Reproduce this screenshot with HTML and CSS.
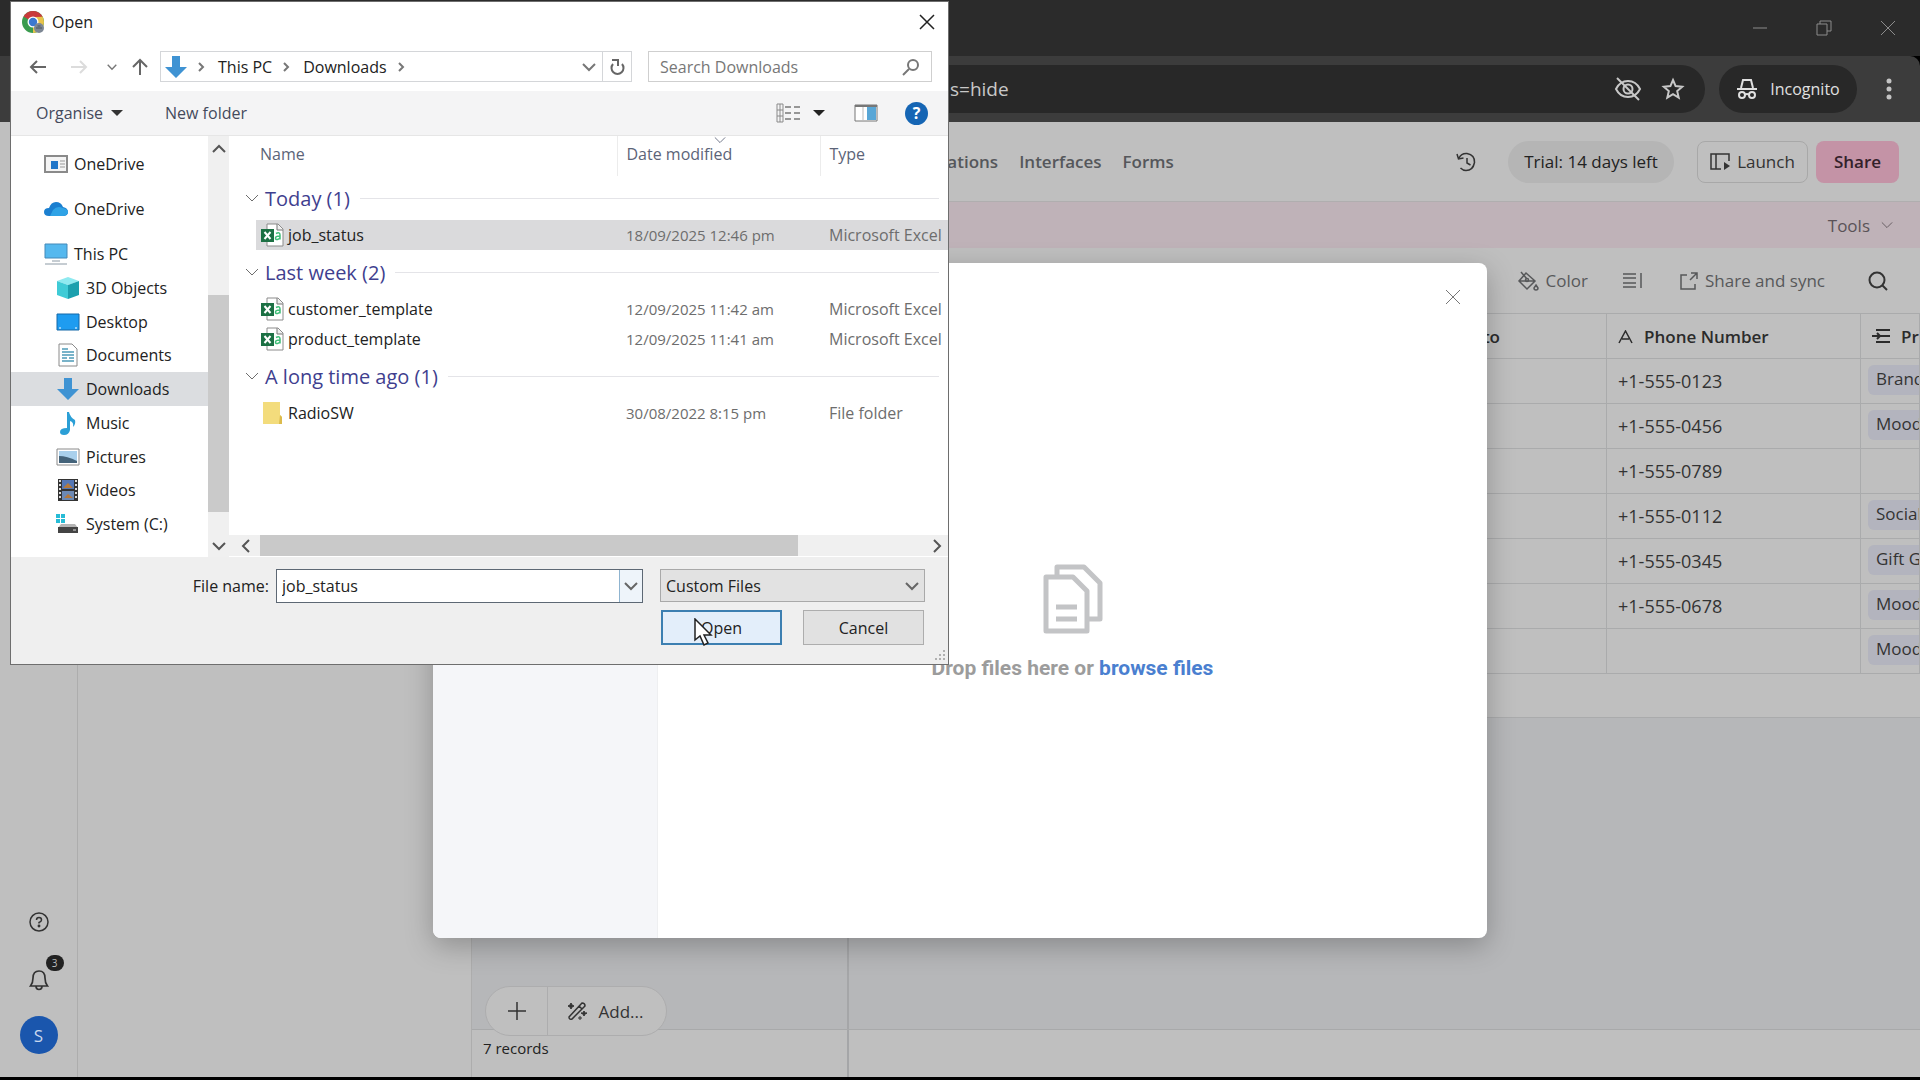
FILE: index.html
```html
<!DOCTYPE html>
<html lang="en">
<head>
  <meta charset="UTF-8">
  <meta name="viewport" content="width=device-width, initial-scale=1.0">
  <title>Import file</title>
  <link rel="stylesheet" href="styles.css">
</head>
<body>
  <svg class="defs" width="0" height="0">
    <symbol id="chevron" viewBox="0 0 14 14"><path d="M1 4l6 6 6-6" fill="none" stroke="currentColor"/></symbol>
    <symbol id="close" viewBox="0 0 16 16"><path d="M1 1l14 14M15 1L1 15" fill="none" stroke="currentColor"/></symbol>
    <symbol id="download" viewBox="0 0 22 24"><path d="M7 1h8v11h7L11 23 0 12h7z" fill="#3f93d3"/></symbol>
    <symbol id="excel" viewBox="0 0 24 24">
      <path d="M7 1h11l5 5v17H7z" fill="#fff" stroke="#8b8b8b"/>
      <path d="M17 1v6h6" fill="#eee" stroke="#777"/>
      <rect x="1" y="6" width="13" height="13" fill="#1c7044"/>
      <path d="M4.500 9l6 7M10.500 9l-6 7" stroke="#fff" stroke-width="2"/>
      <path d="M16 10.500q4-2 4 1.500v4.500M20 13q-4.500 0-4.500 2t2 1.500q2-.5 2.500-2" fill="none" stroke="#3fbf78" stroke-width="1.500"/>
    </symbol>
  </svg>

  <!-- Browser -->
  <div class="titlebar">
    <button aria-label="Minimise"><svg width="16" height="16" viewBox="0 0 16 16"><path d="M1 8h14" stroke="currentColor"/></svg></button>
    <button aria-label="Restore"><svg width="16" height="16" viewBox="0 0 16 16" fill="none" stroke="currentColor"><path d="M1 4h10v11H1zM4 4V1h11v10h-4"/></svg></button>
    <button aria-label="Close window"><svg width="16" height="16"><use href="#close"/></svg></button>
  </div>
  <div class="browser-bar">
    <div class="address">
      <span class="url">s=hide</span>
      <div class="address-icons">
        <svg width="28" height="24" viewBox="0 0 28 24" fill="none" stroke="currentColor" stroke-width="2"><path d="M2 12q4-8 12-8t12 8q-4 8-12 8T2 12z"/><circle cx="14" cy="12" r="4.500"/><path d="M3 1l22 22"/></svg>
        <svg width="24" height="24" viewBox="0 0 24 24" fill="none" stroke="currentColor" stroke-width="2"><path d="M12 3l2.600 6.100 6.600.6-5 4.400 1.500 6.500-5.700-3.400-5.700 3.400 1.500-6.500-5-4.400 6.600-.6z"/></svg>
      </div>
    </div>
    <div class="incognito">
      <svg width="22" height="22" viewBox="0 0 22 22" fill="none" stroke="currentColor" stroke-width="2"><path d="M1 11h20M5 10l2-8h8l2 8" /><circle cx="6" cy="17" r="3"/><circle cx="16" cy="17" r="3"/><path d="M9 16.500q2-1 4 0"/></svg>
      <span>Incognito</span>
    </div>
    <button class="menu" aria-label="Menu"><svg width="6" height="24" viewBox="0 0 6 24" fill="currentColor"><circle cx="3" cy="4" r="2.500"/><circle cx="3" cy="12" r="2.500"/><circle cx="3" cy="20" r="2.500"/></svg></button>
  </div>

  <!-- App -->
  <div class="app">
    <aside class="rail">
      <button class="support" aria-label="Help"><svg width="20" height="20" viewBox="0 0 20 20" fill="none" stroke="currentColor" stroke-width="1.500"><circle cx="10" cy="10" r="9"/><path d="M7.500 8q0-2.500 2.500-2.500T12.500 8q0 1.500-2.500 2.500v1"/><circle cx="10" cy="14" r=".7"/></svg></button>
      <button class="bell" aria-label="Notifications">
        <svg width="20" height="22" viewBox="0 0 20 22" fill="none" stroke="currentColor" stroke-width="1.700"><path d="M10 2q-6 0-6 7 0 5-2.500 8h17Q16 14 16 9q0-7-6-7zM7 17q0 3.500 3 3.500t3-3.500"/></svg>
        <span class="badge">3</span>
      </button>
      <button class="avatar">S</button>
    </aside>
    <div class="main">
      <header class="header">
        <nav class="tabs">
          <a href="#">Automations</a>
          <a href="#">Interfaces</a>
          <a href="#">Forms</a>
        </nav>
        <div class="actions">
          <svg class="history" width="20" height="20" viewBox="0 0 20 20" fill="none" stroke="currentColor" stroke-width="1.500"><path d="M3 6q2.500-5 8-4.500 8 1.500 7.500 9-1.500 8-8.500 8-3 0-5.500-2.500M1 2l1.500 5 5-1M11 6v5l3.500 2"/></svg>
          <button class="trial">Trial: 14 days left</button>
          <button class="launch"><svg width="20" height="20" viewBox="0 0 20 20" fill="none" stroke="currentColor" stroke-width="1.500"><path d="M19 9V2H1v15h10M6 2v15M11 17h-5"/><path d="M14 10l6 4-6 4z" fill="currentColor" stroke="none"/></svg>Launch</button>
          <button class="share">Share</button>
        </div>
      </header>
      <div class="table-tabs">
        <button>Tools <svg width="12" height="12"><use href="#chevron"/></svg></button>
      </div>
      <div class="workspace">
        <div class="sidebar"></div>
        <div class="view">
          <div class="view-bar">
            <button class="tool color"><svg width="22" height="22" viewBox="0 0 22 22" fill="none" stroke="currentColor" stroke-width="1.500"><path d="M9 3l9 8-8 8-8-8zM4 2l6 7M2 11h16"/><circle cx="10" cy="10" r="1.500"/><path d="M19 15l2 3q0 2-2 2t-2-2z"/></svg>Color</button>
            <button class="tool height" aria-label="Row height"><svg width="20" height="18" viewBox="0 0 20 18" stroke="currentColor" stroke-width="1.500"><path d="M0 2h13M0 6h13M0 11h13M0 15h13M18 1v15"/></svg></button>
            <button class="tool sync"><svg width="18" height="18" viewBox="0 0 18 18" fill="none" stroke="currentColor" stroke-width="1.500"><path d="M7 3H1v14h14v-5M11 1h6v6M17 1l-7 7"/></svg>Share and sync</button>
            <button class="tool" aria-label="Search"><svg width="20" height="20" viewBox="0 0 20 20" fill="none" stroke="#333" stroke-width="2"><circle cx="9" cy="9" r="7.500"/><path d="M14 14l5 5"/></svg></button>
          </div>
          <table class="records">
            <colgroup><col class="c-first"><col><col class="c-phone"><col class="c-project"></colgroup>
            <thead>
              <tr>
                <th></th>
                <th class="to">to</th>
                <th><svg width="15" height="14" viewBox="0 0 15 14" fill="none" stroke="currentColor" stroke-width="1.500"><path d="M1 13L7.500 1 14 13M4 9h7"/></svg>Phone Number</th>
                <th><svg width="18" height="16" viewBox="0 0 18 16" stroke="currentColor" stroke-width="2"><path d="M4 2h14M8 8h10M4 14h14M0 8h8M5 5l3 3-3 3" fill="none"/></svg>Pro</th>
              </tr>
            </thead>
            <tbody>
              <tr><td></td><td></td><td>+1-555-0123</td><td><span class="chip">Brand</span></td></tr>
              <tr><td></td><td></td><td>+1-555-0456</td><td><span class="chip">Mood</span></td></tr>
              <tr><td></td><td></td><td>+1-555-0789</td><td></td></tr>
              <tr><td></td><td></td><td>+1-555-0112</td><td><span class="chip">Social</span></td></tr>
              <tr><td></td><td></td><td>+1-555-0345</td><td><span class="chip">Gift G</span></td></tr>
              <tr><td></td><td></td><td>+1-555-0678</td><td><span class="chip">Mood</span></td></tr>
              <tr><td></td><td></td><td></td><td><span class="chip">Mood</span></td></tr>
            </tbody>
          </table>
          <div class="add-row"></div>
          <div class="empty"><div class="frozen"></div></div>
          <footer class="summary">
            <div class="count">7 records</div>
            <div class="add-pill">
              <button class="plus" aria-label="Add record"><svg width="18" height="18" viewBox="0 0 18 18" stroke="currentColor" stroke-width="1.500"><path d="M9 0v18M0 9h18"/></svg></button>
              <button class="add"><svg width="20" height="20" viewBox="0 0 20 20" fill="none" stroke="currentColor" stroke-width="1.500"><path d="M2 16L15 2q3 0 3 3L5 18q-3 1-3-2zM12 5l3 3"/><path d="M4 2l1 2 2 1-2 1-1 2-1-2-2-1 2-1zM17 10l1 2 2 0-2 1-1 2-1-2-2-1 2 0zM13 15v4M11 17h4" fill="currentColor" stroke-width="1"/></svg>Add...</button>
            </div>
          </footer>
        </div>
      </div>
    </div>

    <!-- Upload modal -->
    <div class="overlay">
      <div class="modal">
        <div class="sources"></div>
        <div class="upload">
          <div class="upload-head"><button aria-label="Close"><svg width="16" height="16"><use href="#close"/></svg></button></div>
          <div class="drop">
            <svg width="62" height="72" viewBox="0 0 62 72" fill="none" stroke="#c3c4c6" stroke-width="5" stroke-linejoin="round"><path d="M4 14h27l14 14v40H4z"/><path d="M15 12V4h27l16 16v36h-12"/><path d="M14 44h21M14 56h21"/></svg>
            <p>Drop files here or <a href="#">browse files</a></p>
          </div>
        </div>
      </div>
    </div>
  </div>

  <!-- File picker window -->
  <div class="picker">
    <div class="picker-title">
      <svg width="24" height="24" viewBox="0 0 24 24">
        <circle cx="12" cy="12" r="11" fill="#3a9b4e"/>
        <path d="M2.500 6.500A11 11 0 0 1 21.500 6.500L12 12z" fill="#c93a3c"/>
        <path d="M21.500 6.500A11 11 0 0 1 12 23L12 12 15 7z" fill="#e9c34a"/>
        <path d="M12 6.500h9.500L12 3z" fill="#c93a3c"/>
        <circle cx="12" cy="12" r="5.500" fill="#fff"/><circle cx="12" cy="12" r="4.200" fill="#3b78d0"/>
        <circle cx="18" cy="18" r="5" fill="#7d8794"/><path d="M15 18h6M16.500 16h3" stroke="#4b535e"/>
      </svg>
      <span>Open</span>
      <button aria-label="Close"><svg width="16" height="16" stroke-width="1.500"><use href="#close"/></svg></button>
    </div>
    <div class="picker-nav">
      <div class="arrows">
        <svg width="18" height="16" viewBox="0 0 18 16" fill="none" stroke="#666" stroke-width="2"><path d="M17 8H2M8 2L2 8l6 6"/></svg>
        <svg width="18" height="16" viewBox="0 0 18 16" fill="none" stroke="#dcdcdc" stroke-width="2"><path d="M1 8h15M10 2l6 6-6 6"/></svg>
        <svg class="recent" width="10" height="10" stroke-width="2"><use href="#chevron"/></svg>
        <svg width="16" height="18" viewBox="0 0 16 18" fill="none" stroke="#666" stroke-width="2"><path d="M8 17V2M1 9l7-7 7 7"/></svg>
      </div>
      <div class="crumbs">
        <svg width="22" height="24"><use href="#download"/></svg>
        <svg class="sep" width="8" height="10" viewBox="0 0 8 10"><path d="M2 1l4 4-4 4" fill="none" stroke="#777" stroke-width="2"/></svg>
        <span>This PC</span>
        <svg class="sep" width="8" height="10" viewBox="0 0 8 10"><path d="M2 1l4 4-4 4" fill="none" stroke="#777" stroke-width="2"/></svg>
        <span>Downloads</span>
        <svg class="sep" width="8" height="10" viewBox="0 0 8 10"><path d="M2 1l4 4-4 4" fill="none" stroke="#777" stroke-width="2"/></svg>
        <svg class="drop-arrow" width="14" height="14" stroke-width="2"><use href="#chevron"/></svg>
        <button class="refresh" aria-label="Refresh"><svg width="16" height="18" viewBox="0 0 16 18" fill="none" stroke="#666" stroke-width="2"><path d="M13 6a6 6 0 1 1-9 0M3 2h6v6"/></svg></button>
      </div>
      <div class="search">
        <input type="text" aria-label="Search Downloads" placeholder="Search Downloads">
        <svg width="18" height="18" viewBox="0 0 18 18" fill="none" stroke="#777" stroke-width="2"><circle cx="11" cy="7" r="5"/><path d="M7 11l-6 6"/></svg>
      </div>
    </div>
    <div class="picker-tools">
      <button>Organise <svg width="12" height="6" viewBox="0 0 12 6"><path d="M0 0h12L6 6z" fill="#333"/></svg></button>
      <button>New folder</button>
      <div class="view-tools">
        <svg width="24" height="20" viewBox="0 0 24 20" fill="none" stroke="#8a8a8a"><path d="M1 1h6v18H1zM1 7h6M1 13h6M4 1v18"/><path d="M9 4h15M9 10h15M9 16h15" stroke="#777" stroke-width="1.500" stroke-dasharray="6 3"/></svg>
        <svg class="caret" width="12" height="6" viewBox="0 0 12 6"><path d="M0 0h12L6 6z" fill="#222"/></svg>
        <svg class="pane" width="24" height="18" viewBox="0 0 24 18"><path d="M1 1h22v16H1z" fill="#fff" stroke="#777"/><path d="M1 2h22" stroke="#777" stroke-width="2"/><path d="M13 3h9v13h-9z" fill="#58a6d6"/><path d="M9 3v13" stroke="#bbb"/></svg>
        <button class="help" aria-label="Help">?</button>
      </div>
    </div>
    <div class="picker-body">
      <div class="tree">
        <ul class="roots">
          <li><svg width="24" height="18" viewBox="0 0 24 18"><path d="M1 1h22v16H1z" fill="#f4f4f4" stroke="#8a8a8a" stroke-width="2"/><path d="M7 6h7v8H7z" fill="#2277c9"/><path d="M16 6h5M16 9h5M16 12h5" stroke="#999"/></svg>OneDrive</li>
          <li><svg width="24" height="16" viewBox="0 0 24 16"><path d="M5 15q-5 0-5-4t5-4q2-6 7-6t7 5q5 1 5 5t-5 4z" fill="#1b7fd0"/><path d="M9 9q4-5 10-2 5 1 5 4t-5 4H6z" fill="#2fa3e6"/></svg>OneDrive</li>
          <li><svg width="24" height="22" viewBox="0 0 24 22"><path d="M1 1h22v14H1z" fill="#55b8ee" stroke="#4489b8"/><path d="M8 18h8M1 21h22" stroke="#8c9aa5"/></svg>This PC</li>
        </ul>
        <ul class="folders">
          <li><svg width="24" height="24" viewBox="0 0 24 24"><path d="M1 5l11-4 11 4-11 4z" fill="#8feaf0"/><path d="M1 5l11 4v14L1 19z" fill="#3fcbd6"/><path d="M23 5L12 9v14l11-4z" fill="#1ca0ae"/></svg>3D Objects</li>
          <li><svg width="24" height="18" viewBox="0 0 24 18"><path d="M1 1h22v16H1z" fill="#1e9cf0" stroke="#1568a8"/><path d="M3 15h2M19 15h2" stroke="#fff"/></svg>Desktop</li>
          <li><svg width="24" height="24" viewBox="0 0 24 24"><path d="M3 1h13l5 5v17H3z" fill="#fff" stroke="#8a8a8a"/><path d="M6 6h6M6 9h12M6 12h12M6 15h5M6 18h12M13 15h5" stroke="#4d9bb8" stroke-width="1.500"/></svg>Documents</li>
          <li class="active"><svg width="24" height="24"><use href="#download"/></svg>Downloads</li>
          <li><svg width="24" height="24" viewBox="0 0 24 24"><path d="M11 1h2q1 5 6 8 1 4-2 7 1-5-3-6v9q-1 5-6 5-4 0-4-3 0-4 7-4z" fill="#2b9fd6"/></svg>Music</li>
          <li><svg width="24" height="18" viewBox="0 0 24 18"><path d="M1 1h22v16H1z" fill="#fff" stroke="#8a8a8a"/><path d="M3 3h18v12H3z" fill="#a9d0ec"/><path d="M3 8q8 0 18 5v2H3z" fill="#44637a"/></svg>Pictures</li>
          <li><svg width="24" height="24" viewBox="0 0 24 24"><path d="M2 1h20v22H2z" fill="#333"/><path d="M6 2h12v9H6z" fill="#5577b5"/><path d="M6 13h12v9H6z" fill="#6c89b5"/><path d="M7 10l5-5 5 5zM8 20l4-4 5 4z" fill="#b5793c"/><path d="M4 2v20M20 2v20" stroke="#ddd" stroke-width="2" stroke-dasharray="2 2"/></svg>Videos</li>
          <li><svg width="24" height="20" viewBox="0 0 24 20"><path d="M0 0h4v4H0zM5 0h4v4H5zM0 5h4v4H0zM5 5h4v4H5z" fill="#27bcd6"/><path d="M5 10h14l3 4H2z" fill="#b5b5b5"/><path d="M2 13h20v6H2z" fill="#444"/><path d="M17 16h3" stroke="#ddd"/></svg>System (C:)</li>
        </ul>
      </div>
      <div class="vscroll">
        <svg width="14" height="14" stroke-width="2"><use href="#chevron" transform="rotate(180 7 7)"/></svg>
        <div class="vthumb"></div>
        <svg width="14" height="14" stroke-width="2"><use href="#chevron"/></svg>
      </div>
      <div class="files">
        <table class="file-list">
          <colgroup><col class="c-indent"><col class="c-name"><col class="c-date"><col></colgroup>
          <thead>
            <tr>
              <th></th><th>Name</th>
              <th class="sorted">Date modified<svg width="12" height="12"><use href="#chevron"/></svg></th>
              <th>Type</th>
            </tr>
          </thead>
          <tbody>
            <tr class="group"><td colspan="4"><div><svg width="14" height="14"><use href="#chevron"/></svg><span>Today (1)</span></div></td></tr>
            <tr class="selected"><td></td><td class="name"><div><svg width="24" height="24"><use href="#excel"/></svg>job_status</div></td><td class="date">18/09/2025 12:46 pm</td><td>Microsoft Excel</td></tr>
            <tr class="group"><td colspan="4"><div><svg width="14" height="14"><use href="#chevron"/></svg><span>Last week (2)</span></div></td></tr>
            <tr><td></td><td class="name"><div><svg width="24" height="24"><use href="#excel"/></svg>customer_template</div></td><td class="date">12/09/2025 11:42 am</td><td>Microsoft Excel</td></tr>
            <tr><td></td><td class="name"><div><svg width="24" height="24"><use href="#excel"/></svg>product_template</div></td><td class="date">12/09/2025 11:41 am</td><td>Microsoft Excel</td></tr>
            <tr class="group"><td colspan="4"><div><svg width="14" height="14"><use href="#chevron"/></svg><span>A long time ago (1)</span></div></td></tr>
            <tr><td></td><td class="name"><div><svg width="24" height="24" viewBox="0 0 24 24"><path d="M3 1h17v13l2 2v7H3z" fill="#f3dc7c"/><path d="M20 14l2 2v7h-3z" fill="#dcbb4c"/></svg>RadioSW</div></td><td class="date">30/08/2022 8:15 pm</td><td>File folder</td></tr>
          </tbody>
        </table>
        <div class="hscroll">
          <svg width="14" height="14" stroke-width="2"><use href="#chevron" transform="rotate(90 7 7)"/></svg>
          <div class="hthumb"></div>
          <svg width="14" height="14" stroke-width="2"><use href="#chevron" transform="rotate(-90 7 7)"/></svg>
        </div>
      </div>
    </div>
    <div class="picker-foot">
      <label for="fileName">File name:</label>
      <div class="combo">
        <input type="text" id="fileName" value="job_status">
        <button aria-label="Show names"><svg width="14" height="14" stroke-width="2"><use href="#chevron"/></svg></button>
      </div>
      <div class="confirm">
        <div class="select">
          <select aria-label="File type"><option>Custom Files</option></select>
          <svg width="14" height="14" stroke-width="2"><use href="#chevron"/></svg>
        </div>
        <div class="buttons">
          <button class="open">Open</button>
          <button>Cancel</button>
        </div>
      </div>
      <svg class="grip" width="12" height="12" viewBox="0 0 12 12" fill="#b0b0b0"><path d="M9 0h2v2H9zM5 4h2v2H5zM9 4h2v2H9zM1 8h2v2H1zM5 8h2v2H5zM9 8h2v2H9z"/></svg>
    </div>
    <svg class="cursor" width="20" height="28" viewBox="0 0 20 28"><path d="M1 1v21l5-4 4 9 4-2-4-8h7z" fill="#fff" stroke="#222" stroke-width="1.500"/></svg>
  </div>
</body>
</html>
```
FILE: styles.css
```css
* {
  box-sizing: border-box;
}

body {
  font-family: 'Open Sans', 'Noto Sans', sans-serif;
  font-size: 16px;
  margin: 0;
  height: 100vh;
  display: flex;
  flex-direction: column;
  background: #000;
  color: #333;
  overflow: hidden;
}

button,
input,
select {
  font: inherit;
  color: inherit;
}

button {
  background: none;
  border: none;
  padding: 0;
  display: flex;
  align-items: center;
  justify-content: center;
}

svg {
  display: block;
  flex: none;
}

.defs {
  position: absolute;
}

/* Browser */
.titlebar {
  height: 56px;
  flex: none;
  background: #2b2b2b;
  color: #8c8c8c;
  display: flex;
  justify-content: flex-end;
  align-items: center;
  gap: 48px;
  padding-right: 24px;
}

.browser-bar {
  height: 66px;
  flex: none;
  background: #3c3c3c;
  border-top-right-radius: 10px;
  display: flex;
  align-items: center;
  padding: 0 28px 0 160px;
}

.address {
  flex: 1;
  height: 48px;
  border-radius: 0 24px 24px 0;
  background: #282828;
  color: #c8c8c8;
  display: flex;
  align-items: center;
  justify-content: space-between;
  padding: 0 20px 0 790px;
}

.url {
  font-size: 19px;
}

.address-icons {
  display: flex;
  gap: 19px;
}

.incognito {
  width: 138px;
  height: 48px;
  margin: 0 29px 0 14px;
  border-radius: 24px;
  background: #282828;
  color: #e0e0e0;
  display: flex;
  align-items: center;
  justify-content: center;
  gap: 12px;
}

.menu {
  color: #c4c4c4;
}

/* App */
.app {
  flex: 1;
  min-height: 0;
  margin-bottom: 3px;
  background: #bfbfbf;
  font-size: 17px;
  display: flex;
  position: relative;
}

.rail {
  width: 78px;
  border-right: 1px solid #adadad;
  display: flex;
  flex-direction: column;
  justify-content: flex-end;
  align-items: center;
  gap: 25px;
  padding-bottom: 23px;
}

.support {
  margin-bottom: 12px;
}

.bell {
  position: relative;
}

.badge {
  position: absolute;
  left: 17px;
  top: -14px;
  width: 18px;
  height: 16px;
  line-height: 16px;
  border-radius: 8px;
  background: #222;
  color: #bfbfbf;
  font-size: 10px;
}

.avatar {
  width: 38px;
  height: 38px;
  border-radius: 50%;
  background: #1a56ad;
  color: #c9d8ee;
}

.main {
  flex: 1;
  min-width: 0;
  display: flex;
  flex-direction: column;
}

.header {
  height: 80px;
  border-bottom: 1px solid #b0aeaf;
  display: flex;
  align-items: center;
  justify-content: space-between;
  padding: 0 21px 0 814px;
}

.tabs {
  display: flex;
  gap: 21px;
}

.tabs a {
  color: #55575b;
  font-weight: 600;
  text-decoration: none;
}

.actions {
  display: flex;
  align-items: center;
}

.history {
  margin-right: 32px;
}

.trial {
  height: 42px;
  width: 166px;
  border-radius: 21px;
  background: #b5b5b5;
  margin-right: 23px;
  color: #222;
}

.launch {
  height: 42px;
  width: 111px;
  gap: 7px;
  border: 1px solid #a8a8a8;
  border-radius: 8px;
  margin-right: 8px;
}

.share {
  height: 42px;
  width: 83px;
  border-radius: 8px;
  background: #c493a6;
  color: #33212a;
  font-weight: 600;
}

.table-tabs {
  height: 46px;
  background: #bfb2b8;
  display: flex;
  justify-content: flex-end;
  padding-right: 27px;
  color: #5a5257;
}

.table-tabs button {
  gap: 11px;
}

.workspace {
  flex: 1;
  min-height: 0;
  display: flex;
}

.sidebar {
  width: 394px;
  border-right: 1px solid #adadad;
}

.view {
  flex: 1;
  min-width: 0;
  display: flex;
  flex-direction: column;
}

.view-bar {
  height: 65px;
  display: flex;
  align-items: center;
  justify-content: flex-end;
  padding-right: 32px;
}

.tool {
  gap: 7px;
  color: #57585a;
}

.color {
  margin-right: 35px;
}

.height {
  margin-right: 37px;
}

.sync {
  margin-right: 43px;
}

.records {
  table-layout: fixed;
  width: 100%;
  border-collapse: collapse;
}

.c-first {
  width: 377px;
}

.c-phone {
  width: 254px;
}

.c-project {
  width: 59px;
}

.records th,
.records td {
  height: 45px;
  border: 1px solid #aaabac;
  border-left: none;
  padding: 0 0 0 11px;
  font-size: 18px;
  text-align: left;
  white-space: nowrap;
  overflow: hidden;
}

.records td:last-child {
  padding-left: 7px;
}

.records th {
  color: #2b2b2b;
  font-size: 17px;
  font-weight: 600;
}

.records th svg {
  display: inline-block;
  vertical-align: -1px;
  margin-right: 11px;
}

.records .to {
  text-align: right;
  padding-right: 106px;
}

.chip {
  display: block;
  width: 100px;
  height: 30px;
  line-height: 28px;
  margin-bottom: 3px;
  padding-left: 8px;
  border-radius: 6px;
  background: #b3b4be;
  font-size: 17px;
}

.add-row {
  height: 44px;
  border-bottom: 1px solid #aaabac;
}

.empty {
  flex: 1;
  background: #b6b7b9;
}

.frozen {
  width: 377px;
  height: 100%;
  border-right: 2px solid #a5a6a8;
}

.summary {
  height: 48px;
  border-top: 1px solid #a8a9aa;
  position: relative;
}

.count {
  width: 377px;
  height: 100%;
  border-right: 2px solid #a5a6a8;
  font-size: 15px;
  line-height: 36px;
  padding-left: 11px;
  color: #222;
}

.add-pill {
  position: absolute;
  left: 13px;
  bottom: 41px;
  width: 182px;
  height: 50px;
  border: 1px solid #adadae;
  border-radius: 25px;
  background: #bfbfbf;
  display: flex;
}

.plus {
  width: 62px;
  border-right: 1px solid #adadae;
}

.add {
  flex: 1;
  gap: 12px;
  padding-right: 4px;
}

/* Upload modal */
.overlay {
  position: absolute;
  inset: 0;
  display: flex;
  align-items: center;
  justify-content: center;
  padding-top: 2px;
}

.modal {
  width: 1054px;
  height: 675px;
  border-radius: 8px;
  background: #fff;
  box-shadow: 0 8px 28px rgba(0, 0, 0, 0.25);
  display: flex;
  overflow: hidden;
}

.sources {
  width: 225px;
  background: #f5f6f9;
  border-right: 1px solid #eeeff1;
}

.upload {
  flex: 1;
  display: flex;
  flex-direction: column;
}

.upload-head {
  height: 50px;
  display: flex;
  justify-content: flex-end;
  align-items: flex-end;
  padding: 0 26px 8px;
  color: #777;
}

.drop {
  flex: 1;
  display: flex;
  flex-direction: column;
  align-items: center;
  justify-content: center;
  padding-bottom: 8px;
}

.drop p {
  font-family: Roboto, sans-serif;
  font-weight: 700;
  font-size: 21px;
  line-height: 26px;
  color: #9c9c9c;
  margin: 20px 0 0;
}

.drop a {
  color: #4a7fd0;
  text-decoration: none;
}

/* File picker */
.picker {
  position: absolute;
  left: 10px;
  top: 1px;
  width: 939px;
  border: 1px solid #6e6e6e;
  background: #fff;
  color: #222;
}

.picker-title {
  height: 40px;
  display: flex;
  align-items: center;
  gap: 7px;
  padding: 0 13px 0 10px;
}

.picker-title button {
  margin-left: auto;
}

.picker-nav {
  height: 49px;
  display: flex;
  align-items: center;
}

.arrows {
  width: 149px;
  padding-left: 18px;
  display: flex;
  align-items: center;
  gap: 23px;
}

.arrows .recent {
  color: #777;
  margin: 0 -8px 0 -4px;
}

.crumbs {
  width: 472px;
  height: 31px;
  border: 1px solid #d4d6d9;
  display: flex;
  align-items: center;
  padding-left: 4px;
}

.sep {
  margin: 0 13px 0 10px;
}

.drop-arrow {
  margin-left: auto;
  margin-right: 6px;
  color: #777;
}

.refresh {
  width: 29px;
  height: 100%;
  border-left: 1px solid #d4d6d9;
}

.search {
  width: 284px;
  height: 31px;
  margin-left: 16px;
  border: 1px solid #cfcfcf;
  display: flex;
  align-items: center;
  padding: 0 11px;
}

.search input {
  flex: 1;
  min-width: 0;
  border: none;
  padding: 0;
  background: none;
}

.search input::placeholder {
  color: #777;
}

.picker-tools {
  height: 45px;
  background: #f4f4f5;
  border-bottom: 1px solid #e6e6e6;
  color: #444a5c;
  display: flex;
  align-items: center;
  gap: 42px;
  padding: 0 20px 0 25px;
}

.picker-tools button {
  gap: 8px;
}

.view-tools {
  margin-left: auto;
  display: flex;
  align-items: center;
}

.caret {
  margin: 0 29px 0 13px;
}

.pane {
  margin-right: 27px;
}

.view-tools .help {
  width: 23px;
  height: 23px;
  border-radius: 50%;
  background: #1565b4;
  color: #fff;
  font-weight: 700;
}

.picker-body {
  height: 421px;
  display: flex;
}

.tree {
  width: 197px;
}

.tree ul {
  list-style: none;
  margin: 0;
  padding: 0;
  display: grid;
}

.tree li {
  display: flex;
  align-items: center;
  gap: 6px;
}

.tree .roots {
  grid-auto-rows: 45px;
  padding-top: 5px;
}

.roots li {
  padding-left: 33px;
}

.tree .folders {
  height: 270px;
  grid-auto-rows: 1fr;
  margin-top: -5px;
}

.folders li {
  padding-left: 45px;
}

.folders .active {
  background: #dbdde0;
}

.vscroll {
  width: 21px;
  background: #f0f0f0;
  color: #555;
  display: flex;
  flex-direction: column;
  align-items: center;
  justify-content: space-between;
  padding: 6px 0 4px;
}

.vthumb {
  width: 21px;
  height: 217px;
  margin-bottom: 2px;
  margin-top: 113px;
  background: #cacaca;
}

.files {
  flex: 1;
  min-width: 0;
  display: flex;
  flex-direction: column;
  justify-content: space-between;
}

.file-list {
  table-layout: fixed;
  width: 100%;
  border-collapse: collapse;
}

.c-indent {
  width: 27px;
}

.c-name {
  width: 361px;
}

.c-date {
  width: 203px;
}

.file-list td,
.file-list th {
  height: 30px;
  padding: 0 0 0 9px;
  color: #6d6d6d;
  font-weight: 400;
  text-align: left;
  white-space: nowrap;
}

.file-list th {
  height: 40px;
  padding-bottom: 4px;
  color: #5c6478;
  position: relative;
}

.file-list th:nth-child(2) {
  padding-left: 4px;
}

.file-list th + th + th {
  border-left: 1px solid #ececec;
}

.sorted svg {
  position: absolute;
  top: -2px;
  left: 96px;
}

.file-list .date {
  font-size: 15px;
}

.file-list .name {
  padding-left: 4px;
  color: #222;
}

.name div {
  display: flex;
  align-items: center;
  gap: 4px;
}

.selected td:not(:first-child) {
  background: #dadadc;
}

.file-list .group td {
  height: 44px;
  padding: 0 9px 0 16px;
}

.group div {
  display: flex;
  align-items: center;
  gap: 6px;
  font-size: 20px;
}

.group span {
  color: #3f3f8f;
}

.group div::after {
  content: '';
  flex: 1;
  border-top: 1px solid #e4e4e8;
  margin-left: 4px;
}

.hscroll {
  height: 21px;
  margin-bottom: 1px;
  background: #f0f0f0;
  color: #555;
  display: flex;
  align-items: center;
  justify-content: space-between;
  padding: 0 4px 0 10px;
}

.hthumb {
  width: 538px;
  height: 21px;
  margin-right: 125px;
  background: #c9c9c9;
}

.picker-foot {
  height: 107px;
  background: #efefef;
  display: flex;
  align-items: flex-start;
  justify-content: flex-end;
  padding: 12px 23px 0 0;
  position: relative;
}

.picker-foot label {
  line-height: 34px;
  margin-right: 7px;
}

.combo {
  width: 367px;
  height: 34px;
  border: 1px solid #5d6874;
  background: #fff;
  display: flex;
  margin-right: 17px;
}

.combo input {
  flex: 1;
  min-width: 0;
  border: none;
  padding: 0 5px;
  background: none;
}

.combo button {
  width: 23px;
  border-left: 1px solid #8fb4d0;
  background: #eef4fa;
  color: #666;
}

.confirm {
  width: 265px;
}

.select {
  position: relative;
  color: #222;
}

.select select {
  appearance: none;
  width: 100%;
  height: 33px;
  border: 1px solid #a9a9a9;
  border-radius: 0;
  background: #e2e2e2;
  padding: 0 5px;
}

.select svg {
  position: absolute;
  right: 6px;
  top: 10px;
  color: #666;
}

.buttons {
  display: flex;
  justify-content: space-between;
  margin: 8px 1px 0;
}

.buttons button {
  width: 121px;
  height: 35px;
  border: 1px solid #adadad;
  background: #e1e1e1;
}

.buttons .open {
  border: 2px solid #3c7fb1;
  background: #e3eefa;
}

.grip {
  position: absolute;
  right: 2px;
  bottom: 2px;
}

.cursor {
  position: absolute;
  left: 683px;
  top: 616px;
}
```
